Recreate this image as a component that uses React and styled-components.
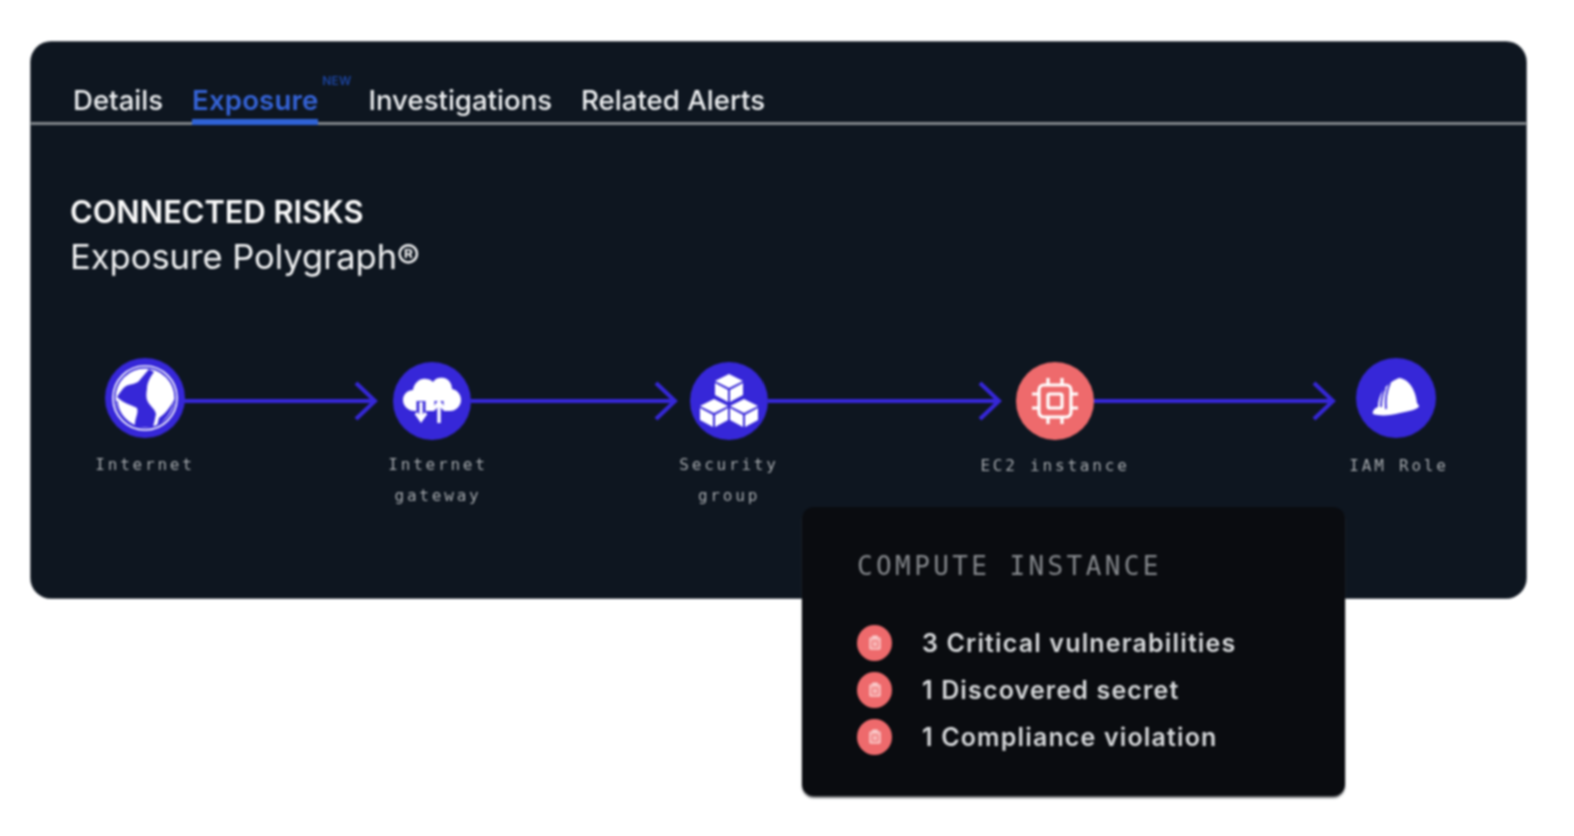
import React from "react";
import styled, { createGlobalStyle } from "styled-components";

const GlobalStyle = createGlobalStyle`
  html, body {
    margin: 0;
    background: #fff;
    font-family: Inter, "Liberation Sans", sans-serif;
  }
`;

const BLUE = "#3627d8";
const RED = "#ee6a6c";

const steps = [
  { name: "Internet", icon: "globe", big: true, arrow: 194, gap: 15, labelTop: 11 },
  { name: "Internet gateway", icon: "cloud", arrow: 207, gap: 12, labelTop: 9, labelShift: 6, labelWidth: 130 },
  { name: "Security group", icon: "cubes", arrow: 234, gap: 14, labelTop: 9, labelWidth: 130 },
  { name: "EC2 instance", icon: "chip", danger: true, arrow: 242, gap: 21, labelTop: 10, labelWidth: 190 },
  { name: "IAM Role", icon: "hat", big: true, labelTop: 12, labelShift: 3 },
];

const risks = ["3 Critical vulnerabilities", "1 Discovered secret", "1 Compliance violation"];

const GlobeIcon = () => (
  <svg width="78" height="78" viewBox="0 0 78 78">
    <circle cx="39" cy="39" r="32" fill="none" stroke="#fff" strokeWidth="1.6" />
    <circle cx="39" cy="39" r="29.5" fill="#fff" />
    <path
      d="M43 10L48 13C44 18 41 24 41 30C40 35 40 40 42 43C44 47 49 50 50 55C49 60 48 64 47 68H29C28 60 33 55 31 49C26 46 18 45 11 38C14 33 17 29 20 27C25 25 30 25 33 22C36 18 40 14 43 10Z"
      fill={BLUE}
    />
    <path d="M68.5 40C67 50 61 60 51 67L53 59C60 54 65 47 68.5 40Z" fill={BLUE} />
    <path d="M11 42C12 53 19 62 29 67" fill="none" stroke={BLUE} strokeWidth="1.4" />
  </svg>
);

const CloudIcon = () => (
  <svg width="58" height="48" viewBox="0 0 58 48">
    <path
      d="M12 34C5 34 0 29 0 23C0 17 5 13 10 13C11 6 17 1 23 2C26 2 28 3 30 5C32 1 37 0 41 1C46 2 49 7 49 12C54 13 58 17 58 23C58 29 53 34 47 34Z"
      fill="#fff"
    />
    <path d="M18 24V44M36 45V24" fill="none" stroke={BLUE} strokeWidth="9" />
    <path d="M18 25V42M13 36L18 43L23 36" fill="none" stroke="#fff" strokeWidth="3.4" />
    <path d="M36 46V26M31 32L36 25L41 32" fill="none" stroke="#fff" strokeWidth="3.4" />
  </svg>
);

const Cube = ({ cx, top }) => (
  <g fill="#fff">
    <polygon points={`${cx},${top} ${cx + 14},${top + 7} ${cx},${top + 14} ${cx - 14},${top + 7}`} />
    <polygon points={`${cx - 14},${top + 9} ${cx - 1},${top + 16} ${cx - 1},${top + 28} ${cx - 14},${top + 21}`} />
    <polygon points={`${cx + 14},${top + 9} ${cx + 1},${top + 16} ${cx + 1},${top + 28} ${cx + 14},${top + 21}`} />
  </g>
);

const CubesIcon = () => (
  <svg width="60" height="54" viewBox="0 0 60 54">
    <Cube cx={30} top={0} />
    <Cube cx={15} top={25} />
    <Cube cx={45} top={25} />
  </svg>
);

const ChipIcon = () => (
  <svg width="46" height="46" viewBox="0 0 46 46" fill="none" stroke="#fff" strokeWidth="3.2">
    <rect x="7" y="7" width="32" height="32" rx="5" />
    <rect x="16" y="16" width="14" height="14" rx="1.5" />
    <path d="M16 0V7M30 0V7M16 39V46M30 39V46M0 16H7M0 30H7M39 16H46M39 30H46" />
  </svg>
);

const HatIcon = () => (
  <svg width="48" height="40" viewBox="0 0 48 40">
    <path
      d="M27 0C38 1 44 14 45 25L47 28C47 31 38 33 28 35C18 38 6 38 1 36C0 33 3 30 6 29C6 18 12 6 27 0Z"
      fill="#fff"
    />
    <path d="M18 5C14 14 13 22 14 31M13 10C10 17 9 23 9 29" fill="none" stroke={BLUE} strokeWidth="1.8" />
  </svg>
);

const ClipIcon = () => (
  <svg width="14" height="16" viewBox="0 0 14 16" fill="none">
    <rect x="1" y="2" width="12" height="13" rx="2" fill="#f7b5b5" />
    <rect x="4" y="0.5" width="6" height="3" rx="1" fill="#f9cccc" />
    <rect x="4" y="6" width="6" height="6" rx="1" stroke={RED} strokeWidth="1" />
  </svg>
);

const icons = {
  globe: <GlobeIcon />,
  cloud: <CloudIcon />,
  cubes: <CubesIcon />,
  chip: <ChipIcon />,
  hat: <HatIcon />,
};

export default function App() {
  return (
    <Page>
      <GlobalStyle />
      <Card>
        <Tabs>
          <Tab>Details</Tab>
          <Tab $active>
            Exposure
            <NewBadge>NEW</NewBadge>
          </Tab>
          <Tab>Investigations</Tab>
          <Tab>Related Alerts</Tab>
        </Tabs>
        <Body>
          <Eyebrow>CONNECTED RISKS</Eyebrow>
          <Title>Exposure Polygraph®</Title>
          <Flow>
            {steps.map((step) => (
              <React.Fragment key={step.name}>
                <Step>
                  <Circle $big={step.big} $danger={step.danger}>
                    {icons[step.icon]}
                  </Circle>
                  <StepLabel $top={step.labelTop} $shift={step.labelShift} $width={step.labelWidth}>
                    {step.name}
                  </StepLabel>
                </Step>
                {step.arrow && (
                  <Arrow
                    $gap={step.gap}
                    width={step.arrow}
                    height="44"
                    viewBox={`0 0 ${step.arrow} 44`}
                    fill="none"
                    stroke={BLUE}
                    strokeWidth="4"
                  >
                    <path d={`M0 22H${step.arrow - 2}`} />
                    <path d={`M${step.arrow - 22} 4L${step.arrow - 3} 22L${step.arrow - 22} 40`} />
                  </Arrow>
                )}
              </React.Fragment>
            ))}
          </Flow>
        </Body>
        <Popover>
          <PopoverTitle>COMPUTE INSTANCE</PopoverTitle>
          <RiskList>
            {risks.map((risk) => (
              <Risk key={risk}>
                <RiskDot>
                  <ClipIcon />
                </RiskDot>
                {risk}
              </Risk>
            ))}
          </RiskList>
        </Popover>
      </Card>
    </Page>
  );
}

const Page = styled.div`
  padding: 42px 48px 0 31px;
  height: 836px;
  box-sizing: border-box;
  filter: blur(0.8px);
`;

const Card = styled.div`
  position: relative;
  height: 556px;
  background: #0e1620;
  border-radius: 20px;
  box-shadow: 0 0 0 1px #5a6068;
`;

const Tabs = styled.div`
  display: flex;
  gap: 29px;
  height: 83px;
  padding-left: 42px;
  box-sizing: border-box;
  align-items: flex-end;
  border-bottom: 3px solid #7f8489;
`;

const Tab = styled.div`
  position: relative;
  box-sizing: border-box;
  height: 40px;
  margin-bottom: -3px;
  margin-right: ${(p) => (p.$active ? "21px" : "0")};
  font-size: 27.6px;
  line-height: 30px;
  letter-spacing: ${(p) => (p.$active ? "0.15px" : "0")};
  font-weight: ${(p) => (p.$active ? 600 : 500)};
  color: ${(p) => (p.$active ? "#3563d6" : "#eceef0")};
  border-bottom: ${(p) => (p.$active ? "6px solid #2f62d6" : "none")};
`;

const NewBadge = styled.span`
  position: absolute;
  top: -11px;
  right: -33px;
  font-size: 12px;
  line-height: 14px;
  font-weight: 600;
  color: #1c44a0;
`;

const Body = styled.div`
  padding: 68px 0 0 39px;
`;

const Eyebrow = styled.div`
  font-size: 30.8px;
  line-height: 38px;
  font-weight: 600;
  color: #fafafa;
`;

const Title = styled.div`
  margin-top: 5px;
  font-size: 34.5px;
  line-height: 42px;
  font-weight: 400;
  color: #f2f3f4;
`;

const Flow = styled.div`
  display: flex;
  align-items: flex-start;
  margin: 80px 0 0 36px;
`;

const Step = styled.div`
  display: flex;
  flex-direction: column;
  align-items: center;
  width: 78px;
`;

const Circle = styled.div`
  display: flex;
  align-items: center;
  justify-content: center;
  flex-shrink: 0;
  width: ${(p) => (p.$big ? "80px" : "78px")};
  height: ${(p) => (p.$big ? "80px" : "78px")};
  margin-top: ${(p) => (p.$big ? "0" : "4px")};
  border-radius: 50%;
  background: ${(p) => (p.$danger ? RED : BLUE)};
`;

const StepLabel = styled.div`
  flex-shrink: 0;
  width: ${(p) => p.$width || 120}px;
  margin-top: ${(p) => p.$top}px;
  transform: translateX(${(p) => p.$shift || 0}px);
  text-align: center;
  font-family: "DejaVu Sans Mono", monospace;
  font-size: 16px;
  line-height: 31px;
  letter-spacing: 2.8px;
  color: #a4a8ac;
`;

const Arrow = styled.svg`
  flex-shrink: 0;
  margin-top: 21px;
  margin-right: ${(p) => p.$gap}px;
`;

const Popover = styled.div`
  position: absolute;
  left: 771px;
  top: 465px;
  width: 543px;
  height: 289px;
  padding: 43px 55px 0;
  box-sizing: border-box;
  background: #0a0c10;
  border-radius: 12px;
  box-shadow: 0 2px 2px rgba(60, 62, 66, 0.8);
`;

const PopoverTitle = styled.div`
  font-family: "DejaVu Sans Mono", monospace;
  font-size: 26px;
  line-height: 32px;
  letter-spacing: 3.4px;
  font-weight: 500;
  color: #85888c;
`;

const RiskList = styled.div`
  display: flex;
  flex-direction: column;
  gap: 11px;
  margin-top: 43px;
`;

const Risk = styled.div`
  display: flex;
  align-items: center;
  gap: 30px;
  height: 36px;
  font-size: 25px;
  font-weight: 600;
  letter-spacing: 1.15px;
  color: #d6d8da;
`;

const RiskDot = styled.span`
  display: flex;
  align-items: center;
  justify-content: center;
  width: 35px;
  height: 36px;
  border-radius: 50%;
  background: ${RED};
`;
